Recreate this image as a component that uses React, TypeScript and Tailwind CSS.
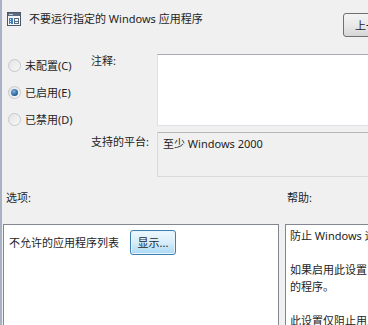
import type { ReactNode } from 'react'

const font = { fontFamily: '"Noto Sans", "Noto Sans CJK SC", sans-serif' }

export default function App() {
  return (
    <div
      className="flex h-[325px] w-[368px] overflow-hidden border-l-2 border-[#a7b3c4] bg-[#f0f0f0] text-[11px] leading-[17px] text-[#1e1e1e]"
      style={font}
    >
      <div className="flex w-[366px] shrink-0 flex-col">
        <Header />
        <Settings />
        <div className="mt-[12px] flex h-[20px] items-center">
          <span className="w-[282px] shrink-0 pl-[4px]">选项:</span>
          <span className="whitespace-nowrap pl-[3px]">帮助:</span>
        </div>
        <div className="mt-[18px] flex flex-1 gap-[6px] pl-[1px]">
          <OptionsPanel />
          <HelpPanel />
        </div>
      </div>
    </div>
  )
}

function Header() {
  return (
    <div className="flex h-[54px] shrink-0 items-start justify-between">
      <div className="flex items-center gap-[7px] pl-[4px] pt-[10px]">
        <PolicyIcon />
        <span className="whitespace-nowrap">不要运行指定的 Windows 应用程序</span>
      </div>
      <button className="mt-[13px] flex h-[24px] w-[80px] shrink-0 translate-x-[55px] items-center whitespace-nowrap rounded-[3px] border border-[#707070] bg-gradient-to-b from-[#f4f4f4] via-[#e9e9e9] to-[#d6d6d6] pl-[11px] text-[11px]">
        上一个设置(P)
      </button>
    </div>
  )
}

function Settings() {
  return (
    <div className="flex shrink-0">
      <div className="flex w-[87px] shrink-0 flex-col gap-[7px] pl-[6px] pt-[1px]">
        <Radio label="未配置(C)" />
        <Radio label="已启用(E)" checked />
        <Radio label="已禁用(D)" />
      </div>
      <div className="flex flex-1 flex-col gap-[6px]">
        <div className="flex">
          <span className="w-[68px] shrink-0 pl-[2px] leading-[14px]">注释:</span>
          <div className="h-[72px] w-[260px] shrink-0 border border-[#dfe1e6] border-t-[#a9abb1] bg-white" />
        </div>
        <div className="flex">
          <span className="w-[68px] shrink-0 whitespace-nowrap pl-[2px] pt-[1px]">支持的平台:</span>
          <div className="h-[45px] w-[260px] shrink-0 border border-[#d9d9d9] border-t-[#b5b5b5] bg-[#f0f0f0] pl-[5px] pt-[2px]">
            至少 Windows 2000
          </div>
        </div>
      </div>
    </div>
  )
}

function Radio({ label, checked }: { label: string; checked?: boolean }) {
  return (
    <div className="flex h-[20px] items-center gap-[4px]">
      <span className="flex h-[13px] w-[13px] items-center justify-center rounded-full border border-[#c4c7cc] bg-gradient-to-br from-[#e4e4e4] to-[#f8f8f8]">
        {checked ? (
          <span className="h-[7px] w-[7px] rounded-full bg-[radial-gradient(circle_at_40%_35%,#7fb4e0,#1d5b96_70%)]" />
        ) : null}
      </span>
      <span className="whitespace-nowrap">{label}</span>
    </div>
  )
}

function OptionsPanel() {
  return (
    <div className="w-[276px] shrink-0 border border-[#828790] bg-white pl-[5px] pt-[5px]">
      <div className="flex items-center gap-[11px]">
        <span className="whitespace-nowrap">不允许的应用程序列表</span>
        <button className="flex h-[25px] w-[46px] items-center justify-center rounded-[3px] border border-[#3c7fb1] bg-gradient-to-b from-[#eef7fd] via-[#d6eefb] to-[#a9d8f2] text-[11px] shadow-[inset_0_0_0_1px_#e8f4fb]">
          显示...
        </button>
      </div>
    </div>
  )
}

function HelpPanel() {
  const lines: ReactNode[] = [
    '防止 Windows 运行指定的应用程序。',
    '',
    '如果启用此设置，用户将无法运行添加到不允许的应用程序列表中',
    '的程序。',
    '',
    '此设置仅阻止用户运行由文件资源管理器启动的程序。',
  ]
  return (
    <div className="w-[200px] shrink-0 border border-[#828790] bg-white pl-[4px] pt-[2px]">
      {lines.map((l, i) => (
        <p key={i} className="h-[17px] whitespace-nowrap">
          {l}
        </p>
      ))}
    </div>
  )
}

function PolicyIcon() {
  return (
    <svg width="16" height="16" viewBox="0 0 16 16" className="shrink-0">
      <rect x="1.5" y="1.5" width="13" height="13" fill="#f4f6f8" stroke="#4a5868" />
      <rect x="2" y="2" width="12" height="3" fill="#5c6c80" />
      <rect x="3" y="3" width="4" height="1" fill="#c9d3de" />
      <rect x="3" y="7" width="4" height="6" fill="#3f7fc0" />
      <rect x="4" y="8" width="1" height="1" fill="#e6eef7" />
      <rect x="4" y="10" width="1" height="1" fill="#e6eef7" />
      <rect x="4" y="12" width="1" height="1" fill="#e6eef7" />
      <rect x="8.5" y="7.5" width="4" height="5" fill="none" stroke="#5a6a7e" />
      <rect x="9" y="10" width="3" height="1" fill="#5a6a7e" />
    </svg>
  )
}
